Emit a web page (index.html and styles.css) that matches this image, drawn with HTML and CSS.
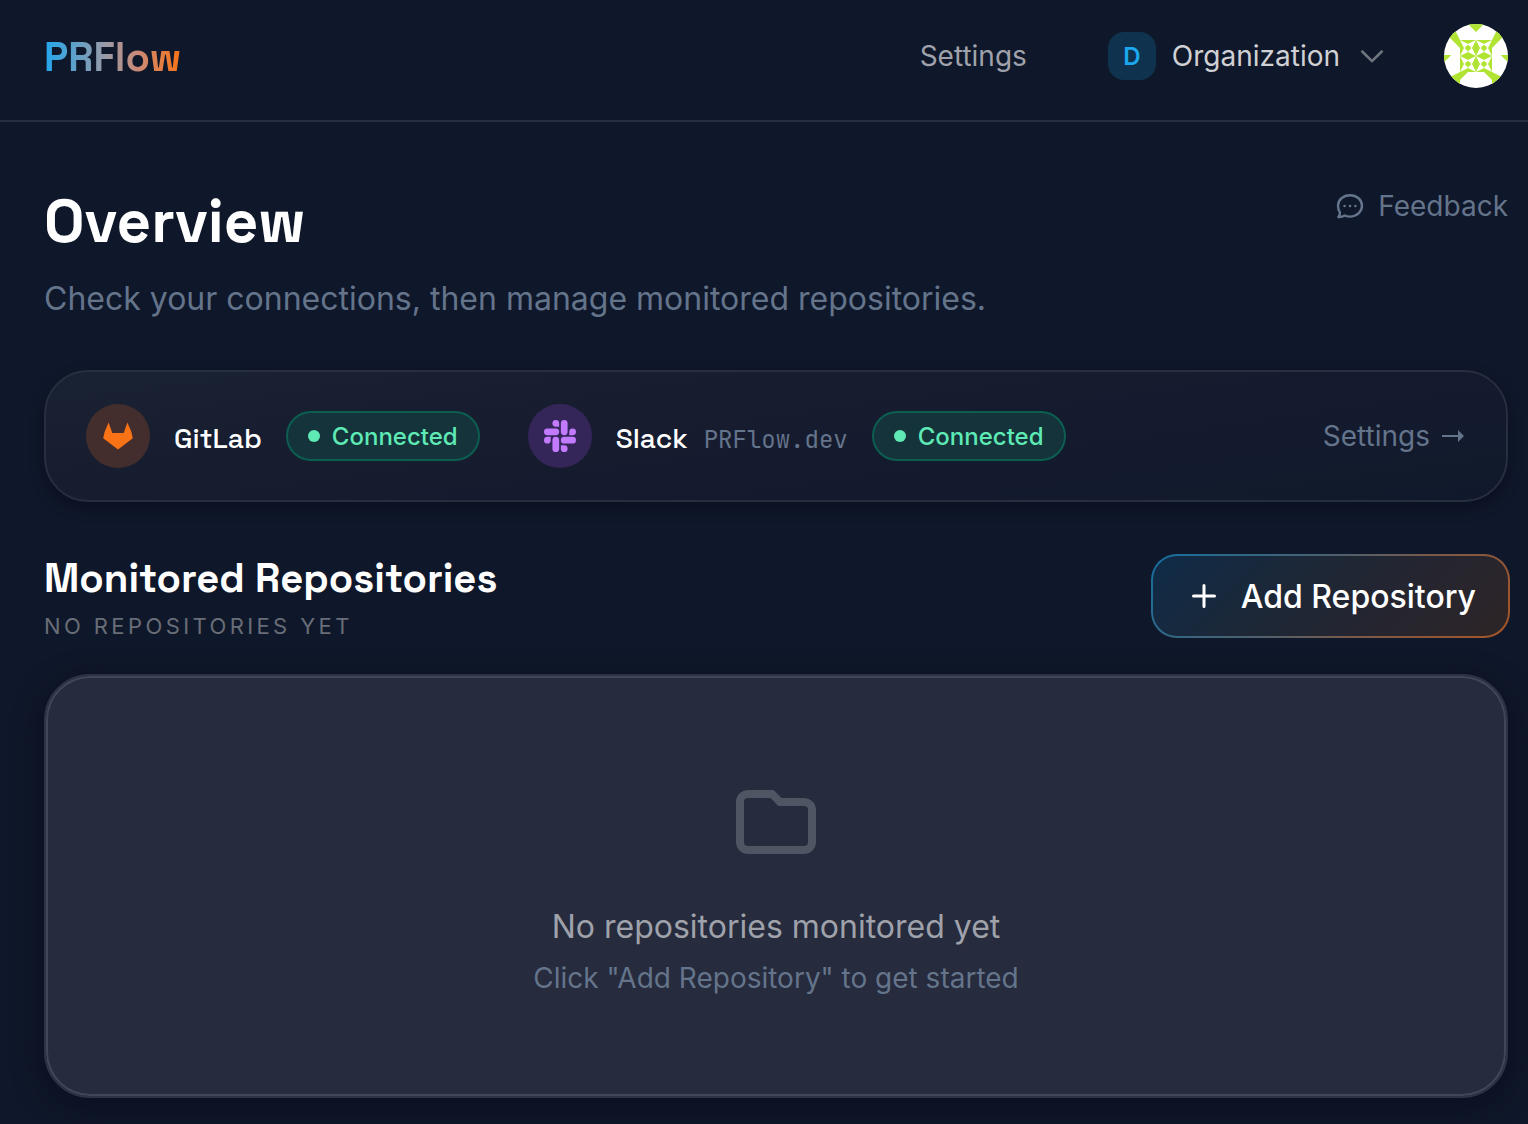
FILE: index.html
```html
<!DOCTYPE html>
<html lang="en">
  <head>
    <meta charset="UTF-8">
    <meta name="viewport" content="width=device-width, initial-scale=1">
    <title>PRFlow</title>
    <link rel="stylesheet" href="styles.css">
  </head>
  <body>

<header class="header">
  <a class="logo" href="#">PRFlow</a>
  <nav class="nav">
    <a class="nav-link" href="#">Settings</a>
    <button class="org" type="button">
      <span class="org-badge">D</span>
      <span class="org-name">Organization</span>
      <svg class="chevron" viewBox="0 0 24 24" width="24" height="24"><path d="M2.200 7.500 12 17.200l9.800-9.700"/></svg>
    </button>
    <svg class="avatar" viewBox="0 0 64 64" width="64" height="64">
      <defs>
        <g id="arm">
          <path d="M0 0 8 4v.6L4.600 8H4z"/>
        </g>
        <g id="tile" fill="#fff">
          <use href="#arm"/>
          <use href="#arm" transform="rotate(90 8 8)"/>
          <use href="#arm" transform="rotate(180 8 8)"/>
          <use href="#arm" transform="rotate(270 8 8)"/>
        </g>
        <g id="side">
          <path d="M16 16v8L0 8V0h8zM0 31h7.500L0 38zM16 48h8l-8 8v8H0v-8z"/>
        </g>
      </defs>
      <rect width="64" height="64" fill="#fff"/>
      <g fill="#b1e432">
        <use href="#side"/>
        <use href="#side" transform="matrix(-1 0 0 1 64 0)"/>
        <path d="M24 0h16l-8 8z"/>
        <rect x="16" y="16" width="32" height="32"/>
      </g>
      <use href="#tile" x="16" y="16"/>
      <use href="#tile" x="32" y="16"/>
      <use href="#tile" x="16" y="32"/>
      <use href="#tile" x="32" y="32"/>
    </svg>
  </nav>
</header>

<main class="main">
  <section class="intro">
    <div>
      <h1>Overview</h1>
      <p class="lead">Check your connections, then manage monitored repositories.</p>
    </div>
    <a class="feedback" href="#">
      <svg viewBox="0 0 28 28" width="28" height="28">
        <path d="M14 3.200c6.800 0 12 4.600 12 10.600S20.800 24.600 14 24.600c-1.900 0-3.700-.4-5.300-1.100-1.800 1.200-3.900 1.700-6.300 1.500 1.200-1.500 1.800-3.100 1.500-4.700C2.700 18.500 2 16.300 2 13.800 2 7.800 7.200 3.200 14 3.200z"/>
        <circle cx="8.600" cy="14" r="1.300"/><circle cx="14" cy="14" r="1.300"/><circle cx="19.400" cy="14" r="1.300"/>
      </svg>
      Feedback
    </a>
  </section>

  <section class="connections">
    <div class="service">
      <span class="service-icon gitlab">
        <svg viewBox="0 0 32 32" width="32" height="32"><path d="M6.600 2.600 10.300 13h11.400l3.700-10.400 4 9.400 1.400 6.200L16 29.600 1.200 18.200 2.600 12z"/></svg>
      </span>
      <span class="service-name">GitLab</span>
      <span class="status">Connected</span>
    </div>
    <div class="service">
      <span class="service-icon slack">
        <svg viewBox="0 0 24 24" width="32" height="32"><path d="M5.042 15.165a2.528 2.528 0 0 1-2.520 2.523A2.528 2.528 0 0 1 0 15.165a2.527 2.527 0 0 1 2.522-2.520h2.520v2.520zM6.313 15.165a2.527 2.527 0 0 1 2.521-2.520 2.527 2.527 0 0 1 2.521 2.520v6.313A2.528 2.528 0 0 1 8.834 24a2.528 2.528 0 0 1-2.521-2.522v-6.313zM8.834 5.042a2.528 2.528 0 0 1-2.521-2.520A2.528 2.528 0 0 1 8.834 0a2.528 2.528 0 0 1 2.521 2.522v2.520H8.834zM8.834 6.313a2.528 2.528 0 0 1 2.521 2.521 2.528 2.528 0 0 1-2.521 2.521H2.522A2.528 2.528 0 0 1 0 8.834a2.528 2.528 0 0 1 2.522-2.521h6.312zM18.956 8.834a2.528 2.528 0 0 1 2.522-2.521A2.528 2.528 0 0 1 24 8.834a2.528 2.528 0 0 1-2.522 2.521h-2.522V8.834zM17.688 8.834a2.528 2.528 0 0 1-2.523 2.521 2.527 2.527 0 0 1-2.520-2.521V2.522A2.527 2.527 0 0 1 15.165 0a2.528 2.528 0 0 1 2.523 2.522v6.312zM15.165 18.956a2.528 2.528 0 0 1 2.523 2.522A2.528 2.528 0 0 1 15.165 24a2.527 2.527 0 0 1-2.520-2.522v-2.522h2.520zM15.165 17.688a2.527 2.527 0 0 1-2.520-2.523 2.526 2.526 0 0 1 2.520-2.520h6.313A2.527 2.527 0 0 1 24 15.165a2.528 2.528 0 0 1-2.522 2.523h-6.313z"/></svg>
      </span>
      <span class="service-name">Slack</span>
      <span class="workspace">PRFlow.dev</span>
      <span class="status">Connected</span>
    </div>
    <a class="manage" href="#">Settings <svg viewBox="0 0 24 14" width="24" height="14"><path d="M1 6h16V1l6 6-6 6V8H1z"/></svg></a>
  </section>

  <section class="repos">
    <div class="repos-head">
      <div>
        <h2>Monitored Repositories</h2>
        <p class="count">No repositories yet</p>
      </div>
      <button class="add" type="button">
        <svg viewBox="0 0 24 24" width="24" height="24"><path d="M12 1.500v21M1.500 12h21"/></svg>
        <span>Add Repository</span>
      </button>
    </div>
    <div class="empty">
      <svg class="folder" viewBox="0 0 24 24" width="96" height="96"><path d="M3 7v10a2 2 0 0 0 2 2h14a2 2 0 0 0 2-2V9a2 2 0 0 0-2-2h-6l-2-2H5a2 2 0 0 0-2 2z"/></svg>
      <p class="empty-title">No repositories monitored yet</p>
      <p class="empty-hint">Click "Add Repository" to get started</p>
    </div>
  </section>
</main>

  </body>
</html>
```
FILE: styles.css
```css
*, ::before, ::after { box-sizing: border-box; }

body {
  margin: 0;
  min-height: 1124px;
  background: #0f172a;
  color: #fff;
  font-family: Inter, sans-serif;
  font-size: 28px;
  line-height: 40px;
}
h1, h2, p { margin: 0; }
h1, h2, .logo, .service-name { font-family: "Space Grotesk", Inter, sans-serif; }
a { text-decoration: none; }
button {
  font: inherit;
  color: inherit;
  cursor: pointer;
}
svg { flex: none; }

.header {
  display: flex;
  align-items: flex-start;
  justify-content: space-between;
  height: 122px;
  padding: 24px 20px 0 44px;
  border-bottom: 2px solid #272e3f;
}
.logo {
  margin-top: 5px;
  background: linear-gradient(90deg, #22a7ee, #9a9aa6 45%, #c98b78 68%, #f97316);
  -webkit-background-clip: text;
  background-clip: text;
  color: transparent;
  font-size: 40px;
  font-weight: 600;
  line-height: 57px;
}
.nav {
  display: flex;
  align-items: center;
}
.nav-link {
  margin-right: 81px;
  color: #9fa2aa;
}
.org {
  display: flex;
  align-items: center;
  margin-right: 60px;
  padding: 0;
  border: 0;
  background: none;
}
.org-badge {
  width: 48px;
  height: 48px;
  margin-right: 16px;
  border-radius: 16px;
  background: #0f334e;
  color: #1da7f0;
  font-size: 24px;
  font-weight: 600;
  line-height: 49px;
}
.org-name {
  margin-right: 20px;
  color: #cfd1d4;
}
.chevron {
  fill: none;
  stroke: #6f747f;
  stroke-width: 2.5;
  stroke-linecap: round;
  stroke-linejoin: round;
}
.avatar { border-radius: 50%; }

.main { padding: 64px 20px 0 44px; }
.intro {
  display: flex;
  align-items: flex-start;
  justify-content: space-between;
  height: 184px;
}
h1 {
  font-size: 60px;
  font-weight: 700;
  line-height: 72px;
}
.lead {
  margin-top: 17px;
  color: #64748b;
  font-size: 32px;
  line-height: 48px;
}
.feedback {
  display: flex;
  align-items: center;
  gap: 14px;
  color: #64748b;
}
.feedback path {
  fill: none;
  stroke: #64748b;
  stroke-width: 2.4;
  stroke-linejoin: round;
}
.feedback circle { fill: #64748b; }

.connections {
  display: flex;
  align-items: center;
  gap: 48px;
  height: 132px;
  padding: 0 41px 0 40px;
  border: 2px solid #272e3f;
  border-radius: 44px;
  background: linear-gradient(172deg, #192233, #171c2f 40%, #131a2d 75%, #10192b);
  box-shadow: 0 6px 14px rgba(4, 8, 20, .4);
}
.service {
  display: flex;
  align-items: center;
}
.service-icon {
  display: flex;
  align-items: center;
  justify-content: center;
  width: 64px;
  height: 64px;
  margin-right: 24px;
  border-radius: 50%;
}
.gitlab {
  background: #442e2d;
  fill: #f97316;
}
.slack {
  background: #35265a;
  fill: #c27aff;
}
.service-name {
  margin: 4px 24px 0 0;
  font-size: 28px;
  font-weight: 500;
}
.workspace {
  margin: 8px 24px 0 -8px;
  color: #64748b;
  font-family: "JetBrains Mono", "Liberation Mono", monospace;
  font-size: 24px;
}
.status {
  display: flex;
  align-items: center;
  height: 50px;
  padding: 1px 20px 0 20px;
  border: 2px solid #0c5f50;
  border-radius: 25px;
  background: #14333b;
  color: #5ee9b5;
  font-size: 24px;
  font-weight: 500;
}
.status::before {
  content: "";
  width: 12px;
  height: 12px;
  margin: -1px 12px 0 0;
  border-radius: 50%;
  background: #5ee9b5;
}
.manage {
  display: flex;
  align-items: center;
  gap: 11px;
  margin-left: auto;
  color: #64748b;
}
.manage svg { fill: #64748b; }

.repos { padding-top: 52px; }
.repos-head {
  display: flex;
  align-items: flex-start;
  justify-content: space-between;
  height: 120px;
}
h2 {
  font-size: 40px;
  font-weight: 600;
  line-height: 50px;
}
.count {
  margin-top: 6px;
  color: #686d77;
  font-size: 22px;
  line-height: 32px;
  letter-spacing: 3.4px;
  text-transform: uppercase;
}
.add {
  display: flex;
  align-items: center;
  gap: 25px;
  height: 84px;
  margin-right: -2px;
  padding: 0 32px 0 39px;
  border: 2px solid transparent;
  border-radius: 26px;
  background:
    linear-gradient(135deg, #0f2b48, #1d2736 40%, #26252f 70%, #2d2526) padding-box,
    linear-gradient(135deg, #146f9f, #53606a 45%, #7c5a47 65%, #a85425) border-box;
  font-size: 32px;
  font-weight: 500;
}
.add span { padding-top: 2px; }
.add path {
  fill: none;
  stroke: #fff;
  stroke-width: 3;
  stroke-linecap: round;
}

.empty {
  display: flex;
  flex-direction: column;
  align-items: center;
  height: 424px;
  padding-top: 98px;
  border: 2px solid #2d3344;
  border-radius: 46px;
  background: #262b3d;
  box-shadow: inset 0 0 0 2px #414658, 0 8px 32px rgba(4, 6, 18, .4);
}
.folder {
  fill: none;
  stroke: #4f5562;
  stroke-width: 2;
}
.empty-title {
  margin-top: 33px;
  color: #9fa2aa;
  font-size: 32px;
  line-height: 48px;
}
.empty-hint {
  margin-top: 7px;
  color: #64748b;
}
```
